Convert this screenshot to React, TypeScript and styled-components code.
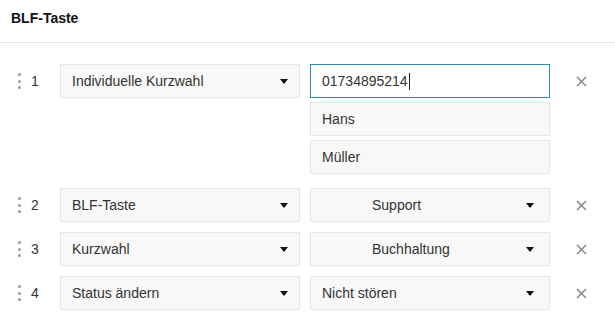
import React from "react";
import styled, {createGlobalStyle} from "styled-components";

const GlobalStyle = createGlobalStyle`
    html, body {
        margin: 0;
        padding: 0;
        background: #ffffff;
    }
    body {
        font-family: "Liberation Sans", Arial, sans-serif;
        color: #333333;
        font-size: 14px;
    }
`;

const Panel = styled.div`
    width: 615px;
    height: 315px;
    overflow: hidden;
    background: #ffffff;
`;

const Header = styled.div`
    height: 43px;
    box-sizing: border-box;
    padding: 10px 0 0 11px;
    border-bottom: 1px solid #e6e6e6;
    font-size: 14px;
    font-weight: bold;
    color: #111111;
`;

const List = styled.div`
    display: flex;
    flex-direction: column;
    gap: 10px;
    padding-top: 21px;
`;

const Row = styled.div`
    display: grid;
    grid-template-columns: 50px 240px 240px 1fr;
    column-gap: 10px;
    align-items: start;
`;

const Lead = styled.div`
    height: 34px;
    display: flex;
    align-items: center;
    gap: 10px;
    padding-left: 18px;
`;

const Handle = styled.div`
    display: flex;
    flex-direction: column;
    gap: 3.5px;

    span {
        width: 3px;
        height: 3px;
        border-radius: 50%;
        background: #9a9a9a;
    }
`;

const Index = styled.span`
    font-size: 14px;
    color: #333333;
`;

const Stack = styled.div`
    display: flex;
    flex-direction: column;
    gap: 4px;
    padding-bottom: 4px;
`;

const Field = styled.div<{$indent?: number; $focus?: boolean}>`
    position: relative;
    height: 34px;
    box-sizing: border-box;
    display: flex;
    align-items: center;
    padding-left: ${(p) => p.$indent ?? 11}px;
    background: ${(p) => (p.$focus ? "#ffffff" : "#f8f8f8")};
    border: 1px solid ${(p) => (p.$focus ? "#2a8daa" : "#e6e6e6")};
    font-size: 14px;
    color: #333333;
    white-space: nowrap;
`;

const Caret = styled.span<{$right: number}>`
    position: absolute;
    right: ${(p) => p.$right}px;
    top: 14px;
    width: 0;
    height: 0;
    border-left: 4.5px solid transparent;
    border-right: 4.5px solid transparent;
    border-top: 5px solid #111111;
`;

const TextCursor = styled.span`
    display: inline-block;
    width: 1px;
    height: 17px;
    background: #222222;
    margin-left: 1px;
`;

const Remove = styled.button`
    height: 34px;
    border: 0;
    background: none;
    padding: 0 0 0 16px;
    display: flex;
    align-items: center;
    cursor: pointer;
`;

const Select: React.FC<{label: string; caret: number; indent?: number}> = ({label, caret, indent}) => (
    <Field $indent={indent}>
        {label}
        <Caret $right={caret}/>
    </Field>
);

const Cross = () => (
    <svg width="11" height="11" viewBox="0 0 11 11">
        <path d="M1 1 L10 10 M10 1 L1 10" stroke="#8a8a8a" strokeWidth="1.6" fill="none"/>
    </svg>
);

const LeadCell: React.FC<{n: number}> = ({n}) => (
    <Lead>
        <Handle><span/><span/><span/></Handle>
        <Index>{n}</Index>
    </Lead>
);

const rows = [
    {n: 2, type: "BLF-Taste", value: "Support", indent: 61},
    {n: 3, type: "Kurzwahl", value: "Buchhaltung", indent: 61},
    {n: 4, type: "Status ändern", value: "Nicht stören", indent: 11},
];

const App: React.FC = () => {
    return (
        <>
            <GlobalStyle/>
            <Panel>
                <Header>BLF-Taste</Header>
                <List>
                    <Row>
                        <LeadCell n={1}/>
                        <Select label="Individuelle Kurzwahl" caret={11}/>
                        <Stack>
                            <Field $focus>
                                01734895214<TextCursor/>
                            </Field>
                            <Field>Hans</Field>
                            <Field>Müller</Field>
                        </Stack>
                        <Remove aria-label="Entfernen"><Cross/></Remove>
                    </Row>
                    {rows.map((r) => (
                        <Row key={r.n}>
                            <LeadCell n={r.n}/>
                            <Select label={r.type} caret={11}/>
                            <Select label={r.value} caret={15} indent={r.indent}/>
                            <Remove aria-label="Entfernen"><Cross/></Remove>
                        </Row>
                    ))}
                </List>
            </Panel>
        </>
    );
};

export default App;
